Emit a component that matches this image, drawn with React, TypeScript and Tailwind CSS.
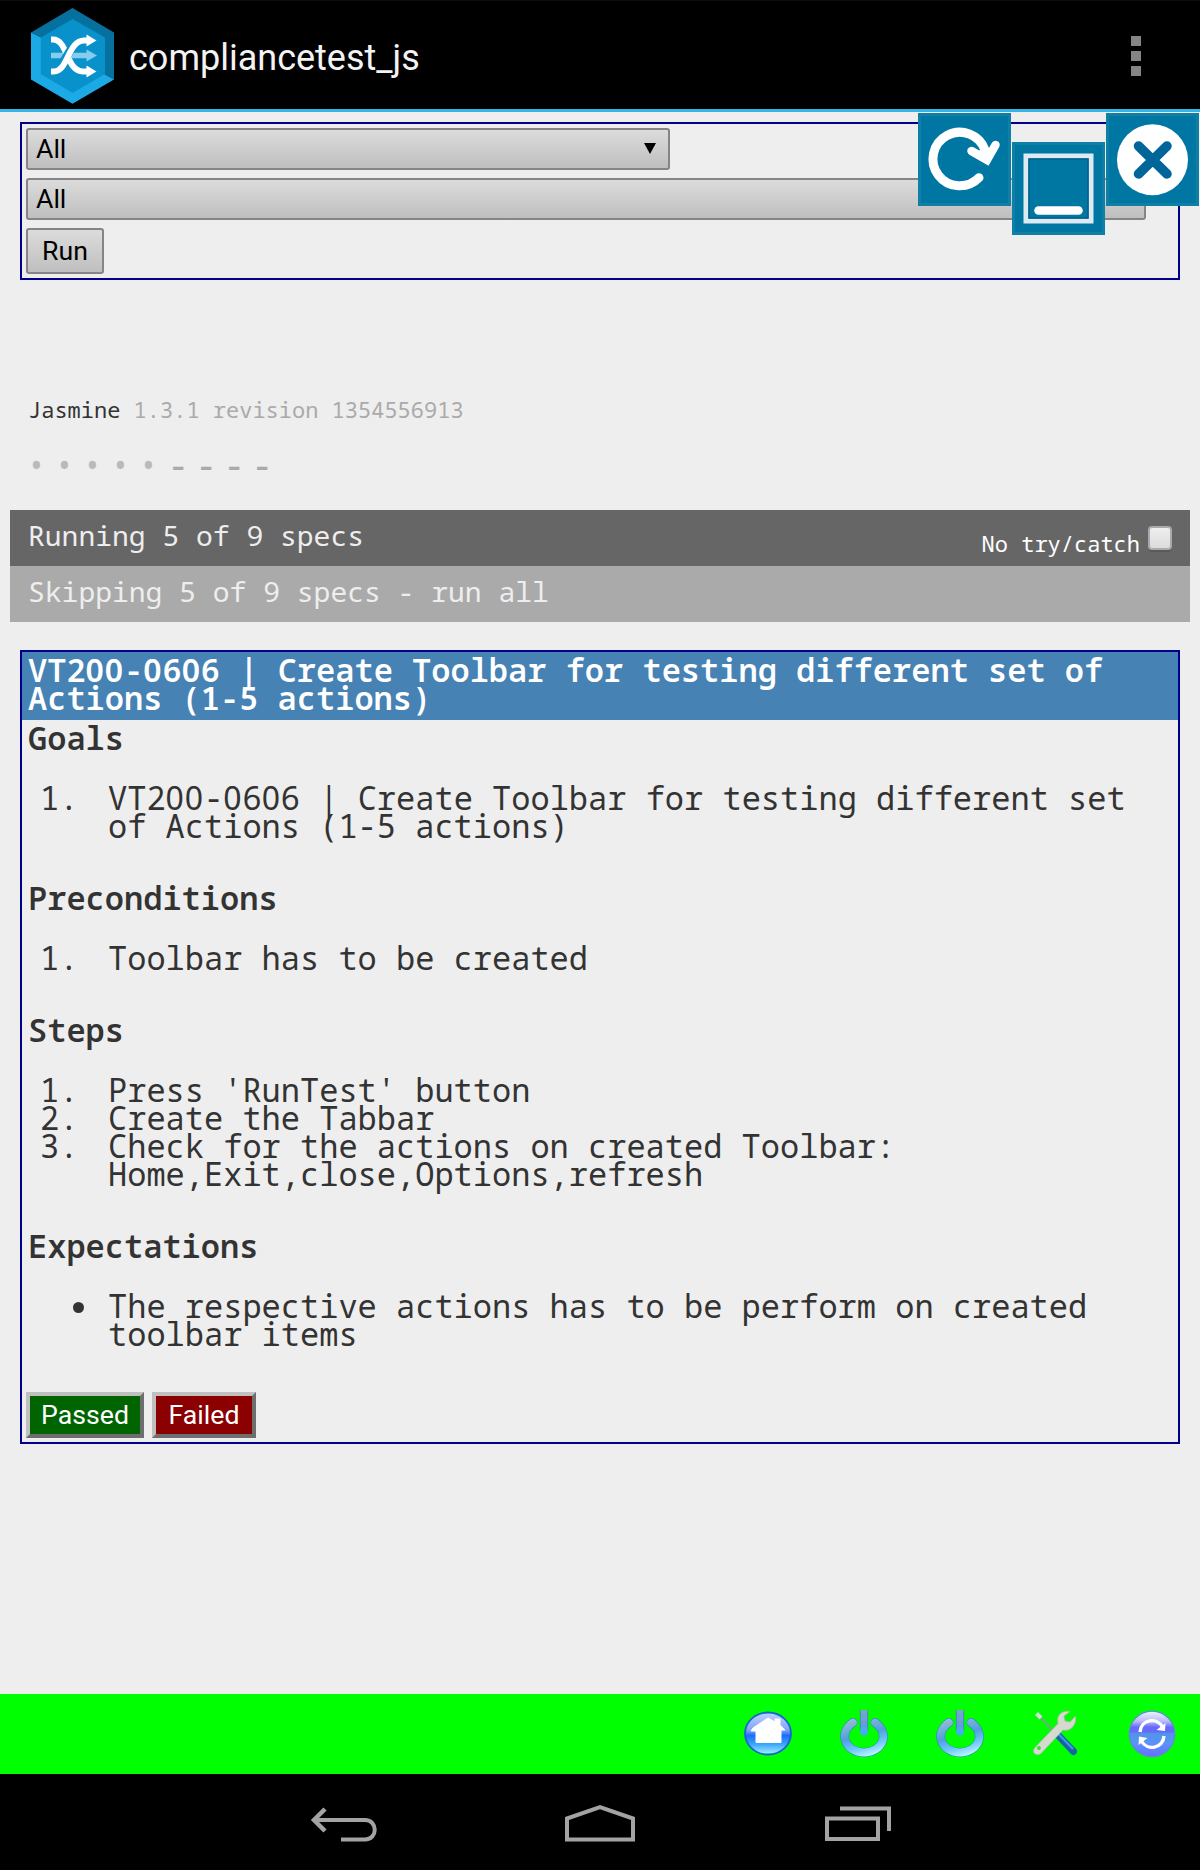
import { Fragment, ReactNode } from "react";

/** Monospace text whose zeros are drawn open, without a slash. */
function Mono({ children }: { children: string }) {
  return (
    <>
      {children.split("0").map((part, i) => (
        <Fragment key={i}>
          {i > 0 && <span className="font-['Noto_Sans'] tracking-[0.028em]">0</span>}
          {part}
        </Fragment>
      ))}
    </>
  );
}

function AppLogo() {
  return (
    <svg className="mt-[2px] h-[104px] w-[96px] shrink-0" viewBox="0 0 96 104" fill="none">
      <polygon points="48.500,4 90,28.500 90,75.500 81,70.500 48.500,52 17,33.500 7,28.500" fill="#06719f" />
      <polygon points="7,28.500 17,33.500 48.500,52 81,70.500 90,75.500 48.500,99.800 7,75.500" fill="#1caae6" />
      <polygon points="48.500,15 81,33.500 81,70 48.500,89 16.800,70 16.800,33.500" fill="#0891ca" />
      <path d="M27 51.500H64" stroke="#84cdee" strokeWidth="5.500" />
      <polygon points="62.500,45.500 73,51.500 62.500,57.500" fill="#84cdee" />
      <path d="M27 35.500H29C44 35.500 42 67.500 59 67.500H64" stroke="#fff" strokeWidth="6" />
      <path d="M36 62.500C43 54 46 44 53 38" stroke="#0891ca" strokeWidth="8.500" />
      <path d="M27 67.500H30C44 67.500 44 36.500 60 36.500H64" stroke="#fff" strokeWidth="6" />
      <polygon points="62.500,30.500 72.500,36.500 62.500,42.500" fill="#fff" />
      <polygon points="62.500,61.500 72.500,67.500 62.500,73.500" fill="#fff" />
    </svg>
  );
}

function Tile({ children, className = "" }: { children: ReactNode; className?: string }) {
  return (
    <div className={`size-[93px] border-[3px] border-[#107fa6] bg-[#0077a3] ${className}`}>
      <svg className="-m-[3px] block size-[93px]" viewBox="0 0 93 93" fill="none">
        {children}
      </svg>
    </div>
  );
}

function Select({ className, arrow }: { className: string; arrow?: boolean }) {
  return (
    <div
      className={`flex h-[42px] items-center justify-between rounded-[3px] border-2 border-[#858585] bg-linear-to-b from-[#dcdcdc] to-[#bfbfbf] pl-2 pr-3 text-[26.67px] leading-none text-black ${className}`}
    >
      <span>All</span>
      {arrow && (
        <svg className="-mt-[2px] h-[11px] w-3" viewBox="0 0 12 11">
          <path d="M0 0H12L6 11Z" fill="#000" />
        </svg>
      )}
    </div>
  );
}

function Section({ title, items, bullet }: { title: string; items: string[]; bullet?: boolean }) {
  return (
    <section className="mb-[44px]">
      <h2 className="mb-8 font-semibold">{title}</h2>
      <ol>
        {items.map((item, i) => (
          <li key={item} className="flex">
            {bullet ? (
              <span className="flex w-20 shrink-0 items-start pl-[45px] pt-[10px]">
                <span className="size-[11px] rounded-full bg-[#333]" />
              </span>
            ) : (
              <span className="w-20 shrink-0 pl-3">{i + 1}.</span>
            )}
            <span className="w-[1040px]">
              <Mono>{item}</Mono>
            </span>
          </li>
        ))}
      </ol>
    </section>
  );
}

function HomeIcon() {
  return (
    <svg className="size-12" viewBox="0 0 48 48">
      <defs>
        <linearGradient id="homeFill" x1="0" y1="0" x2="0" y2="1">
          <stop offset="0" stopColor="#c3d3ff" />
          <stop offset="0.42" stopColor="#7fa2f8" />
          <stop offset="0.55" stopColor="#1e6bfa" />
          <stop offset="0.75" stopColor="#3aa4fa" />
          <stop offset="1" stopColor="#a8f4fe" />
        </linearGradient>
      </defs>
      <ellipse cx="24" cy="23.500" rx="23" ry="21" fill="url(#homeFill)" stroke="#1565cf" strokeWidth="1.800" />
      <path d="M24 8L31 12V9H36V15L41 20H37V32.500H12V21H7L9 18Z" fill="#fff" stroke="#fff" strokeLinejoin="round" />
    </svg>
  );
}

function PowerIcon() {
  return (
    <svg className="size-12" viewBox="0 0 48 48" fill="none">
      <defs>
        <linearGradient id="powerRing" gradientUnits="userSpaceOnUse" x1="12" y1="6" x2="24" y2="47">
          <stop offset="0" stopColor="#9fc3d2" />
          <stop offset="0.5" stopColor="#4f9fdf" />
          <stop offset="0.78" stopColor="#6ecbfa" />
          <stop offset="1" stopColor="#b8f2ff" />
        </linearGradient>
        <linearGradient id="powerBar" gradientUnits="userSpaceOnUse" x1="0" y1="0" x2="0" y2="26">
          <stop offset="0" stopColor="#7aa6c4" />
          <stop offset="0.6" stopColor="#5c9fdc" />
          <stop offset="1" stopColor="#45b4f2" />
        </linearGradient>
      </defs>
      <path d="M13 12.500C-3 24 6 42.500 24 42.500S51 24 35 12.500" stroke="#2f86b8" strokeWidth="9" strokeLinecap="round" />
      <path d="M13 12.500C-3 24 6 42.500 24 42.500S51 24 35 12.500" stroke="url(#powerRing)" strokeWidth="7.800" strokeLinecap="round" />
      <path d="M24 0V21" stroke="#3980b3" strokeWidth="8.400" />
      <path d="M24 0V21" stroke="url(#powerBar)" strokeWidth="6.800" />
      <circle cx="24" cy="21.500" r="4.200" fill="#45aeea" />
    </svg>
  );
}

function ToolsIcon() {
  return (
    <svg className="size-12" viewBox="0 0 48 48" fill="none">
      <path d="M8 7L25 25" stroke="#78a58a" strokeWidth="2.200" />
      <path d="M4.500 3.500L9 8" stroke="#d5e0d5" strokeWidth="4" />
      <path d="M25 24L41.500 41.500" stroke="#1763a8" strokeWidth="7" strokeLinecap="round" />
      <path d="M26 23.500L41 39" stroke="#3c9be6" strokeWidth="2" />
      <path
        d="M38 1.500C30 0 24 5 26 13.500L3 37.500C-1 42 4 47 9 43.500L31 20C38 22 45 15 43.500 6L38 12L33 11L32 6Z"
        fill="#d6d9d0"
        stroke="#a9b8a2"
        strokeWidth="0.800"
      />
      <circle cx="7" cy="38" r="1.900" fill="#2ce32c" />
    </svg>
  );
}

function RefreshIcon() {
  return (
    <svg className="size-12" viewBox="0 0 48 48" fill="none">
      <defs>
        <linearGradient id="refreshFill" x1="0" y1="0" x2="0" y2="1">
          <stop offset="0" stopColor="#f1f2ff" />
          <stop offset="0.22" stopColor="#b9bcf8" />
          <stop offset="0.35" stopColor="#6769fb" />
          <stop offset="0.46" stopColor="#6769fb" />
          <stop offset="0.48" stopColor="#4f94e6" />
          <stop offset="0.7" stopColor="#5b93fa" />
          <stop offset="1" stopColor="#6a6cff" />
        </linearGradient>
      </defs>
      <circle cx="24" cy="24" r="22.800" fill="url(#refreshFill)" stroke="#5b8fd2" strokeWidth="1.200" />
      <path d="M12 22C13 9 29 7 34.500 17" stroke="#fff" strokeWidth="3.400" />
      <path d="M37.500 13L37 21L28.500 20Z" fill="#fff" />
      <path d="M36 26C35 39 19 41 13.500 31" stroke="#fff" strokeWidth="3.400" />
      <path d="M10.500 35L11 26.500L19.500 28Z" fill="#fff" />
    </svg>
  );
}

export default function App() {
  return (
    <div className="relative flex h-[1870px] w-[1200px] flex-col overflow-hidden bg-[#eee] font-['Noto_Sans_Mono','DejaVu_Sans_Mono',monospace] text-[#333]">
      <header className="flex h-28 shrink-0 items-center justify-between border-b-[3px] border-t border-b-[#33b5e5] border-t-[#0c0c0c] bg-black pl-6 pr-[59px] font-[Roboto,sans-serif]">
        <div className="flex items-center">
          <AppLogo />
          <h1 className="ml-[9px] mt-[5px] text-[36px] leading-none text-[#f3f3f3]">compliancetest_js</h1>
        </div>
        <div className="mt-[2px] flex flex-col gap-[5px]">
          <span className="size-[10px] bg-[#858585]" />
          <span className="size-[10px] bg-[#858585]" />
          <span className="size-[10px] bg-[#858585]" />
        </div>
      </header>

      <section className="mx-5 mt-[10px] flex h-[158px] shrink-0 flex-col items-start gap-2 border-2 border-[#00008b] p-1 font-[Roboto,sans-serif]">
        <Select className="w-[644px]" arrow />
        <Select className="w-[1120px]" />
        <button className="h-[46px] w-[78px] rounded-[3px] border-2 border-[#858585] bg-linear-to-b from-[#dcdcdc] to-[#bfbfbf] text-[26.67px] leading-none text-black">
          Run
        </button>
      </section>

      <div className="mt-[115px] h-7 pl-7 text-[22px] leading-[28px]">
        Jasmine{" "}
        <span className="text-[#aaa]">
          <Mono>1.3.1 revision 1354556913</Mono>
        </span>
      </div>

      <div className="mt-7 flex h-7 items-center pl-7 text-[28px] leading-[28px]">
        {["•", "•", "•", "•", "•"].map((s, i) => (
          <span key={i} className="w-7 font-semibold text-[#bababa]">{s}</span>
        ))}
        {["-", "-", "-", "-"].map((s, i) => (
          <span key={i} className="w-7 text-[34px] font-medium text-[#aaa]">{s}</span>
        ))}
      </div>

      <div className="mx-[10px] mt-[31px] text-[28px] text-[#eee]">
        <div className="flex h-14 items-center justify-between bg-[#666] pl-[18px] pr-[18px]">
          <span className="-mt-[6px] leading-[50px]">Running 5 of 9 specs</span>
          <label className="flex items-center gap-2 text-[22px] text-white">
            <span className="mt-[9px] leading-7">No try/catch</span>
            <span className="size-6 rounded-[4px] border-2 border-[#aaa] bg-linear-to-b from-[#eee] to-[#dcdcdc] shadow-[0_2px_0_#5a5a5a]" />
          </label>
        </div>
        <div className="h-14 bg-[#aaa] pl-[18px] leading-[50px]">Skipping 5 of 9 specs - run all</div>
      </div>

      <main className="mx-5 mt-7 flex h-[794px] shrink-0 flex-col border-2 border-[#00008b] text-[32px] leading-[28px]">
        <h1 className="mb-1 bg-[#4682b4] pb-2 pl-[6px] pt-1 font-semibold text-white">
          <Mono>VT200-0606 | Create Toolbar for testing different set of Actions (1-5 actions)</Mono>
        </h1>
        <div className="pl-[6px]">
          <Section
            title="Goals"
            items={["VT200-0606 | Create Toolbar for testing different set of Actions (1-5 actions)"]}
          />
          <Section title="Preconditions" items={["Toolbar has to be created"]} />
          <Section
            title="Steps"
            items={[
              "Press 'RunTest' button",
              "Create the Tabbar",
              "Check for the actions on created Toolbar: Home,Exit,close,Options,refresh",
            ]}
          />
          <Section
            title="Expectations"
            items={["The respective actions has to be perform on created toolbar items"]}
            bullet
          />
        </div>
        <div className="flex gap-2 pl-1 font-[Roboto,sans-serif] text-[26.67px] leading-none text-white">
          <button className="h-[46px] w-[118px] border-4 border-t-[#c0c0c0] border-r-[#6e6e6e] border-b-[#6e6e6e] border-l-[#c0c0c0] bg-[#006400]">
            Passed
          </button>
          <button className="h-[46px] w-[104px] border-4 border-t-[#c0c0c0] border-r-[#6e6e6e] border-b-[#6e6e6e] border-l-[#c0c0c0] bg-[#8b0000]">
            Failed
          </button>
        </div>
      </main>

      <div className="mt-auto flex h-20 shrink-0 items-center justify-end gap-12 bg-[#0f0] pr-6">
        <HomeIcon />
        <PowerIcon />
        <PowerIcon />
        <ToolsIcon />
        <RefreshIcon />
      </div>

      <nav className="flex h-24 shrink-0 items-center justify-center gap-[186px] bg-black pt-[3px]">
        <svg className="h-10 w-[70px]" viewBox="0 0 70 40" fill="none" stroke="#a3a3a3" strokeWidth="4">
          <path d="M6 16H56C69 16 69 35.500 56 35.500H32" />
          <path d="M16 5L5 16L16 27" strokeWidth="4.500" />
        </svg>
        <svg className="h-10 w-[70px]" viewBox="0 0 70 40" fill="none" stroke="#a3a3a3" strokeWidth="4">
          <path d="M2 35.500V14.500L35 3L68 14.500V35.500Z" />
        </svg>
        <svg className="h-10 w-[70px]" viewBox="0 0 70 40" fill="none" stroke="#a3a3a3" strokeWidth="4">
          <path d="M6 14.500H57V35H6Z" />
          <path d="M19 4.500H68V27" />
        </svg>
      </nav>

      <div className="absolute right-px top-[113px] flex items-start gap-px">
        <Tile>
          <path d="M61 64.700A26.800 26.800 0 1 1 67 37" stroke="#fff" strokeWidth="9" strokeLinecap="round" />
          <path d="M53.500 38L69 47L77.500 32" stroke="#fff" strokeWidth="8.500" strokeLinecap="round" />
          <path d="M57 38L69 46L72 36Z" fill="#fff" />
        </Tile>
        <Tile className="mt-[29px]">
          <rect x="14" y="14" width="65" height="65" stroke="#dcebf2" strokeWidth="5" />
          <rect x="17" y="17" width="59" height="59" stroke="#005f8f" strokeWidth="1.500" />
          <path d="M26.500 68.500H66.500" stroke="#fff" strokeWidth="8.500" strokeLinecap="round" />
        </Tile>
        <Tile>
          <circle cx="46.500" cy="46.800" r="35.500" fill="#fff" />
          <path d="M32.500 33L61 61M61 33L32.500 61" stroke="#006699" strokeWidth="9.500" strokeLinecap="round" />
        </Tile>
      </div>
    </div>
  );
}
